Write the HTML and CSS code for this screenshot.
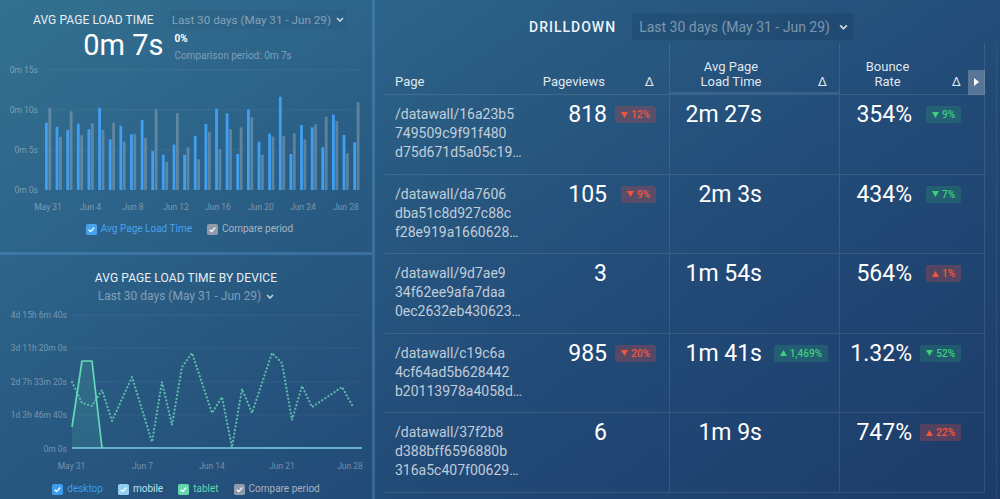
FILE: index.html
```html
<!DOCTYPE html>
<html>
<head>
<meta charset="utf-8">
<link rel="stylesheet" href="styles.css">
</head>
<body>
<div class="app">
  <div class="left">
    <section class="widget w-load">
      <div class="w-head">
        <span class="w-title">AVG PAGE LOAD TIME</span>
        <span class="date-pill">Last 30 days (May 31 - Jun 29)<svg class="chev" viewBox="0 0 8 5"><path d="M1 1l3 3 3-3"/></svg></span>
      </div>
      <div class="kpi">
        <span class="kpi-value">0m 7s</span>
        <div class="kpi-meta">
          <span class="kpi-pct">0%</span>
          <span class="kpi-cmp">Comparison period: 0m 7s</span>
        </div>
      </div>
      <svg class="chart" width="372" height="155" viewBox="0 60 372 155">
        <g class="grid">
          <line x1="43" y1="70" x2="362" y2="70"/>
          <line x1="43" y1="110" x2="362" y2="110"/>
          <line x1="43" y1="150" x2="362" y2="150"/>
        </g>
        <g class="axis" text-anchor="end">
          <text x="38" y="73">0m 15s</text>
          <text x="38" y="113">0m 10s</text>
          <text x="38" y="153">0m 5s</text>
          <text x="38" y="193">0m 0s</text>
        </g>
        <g class="bars-cmp">
          <rect x="48.4" y="107.7" width="2.8" height="82.3"/>
          <rect x="59.0" y="137" width="2.8" height="53"/>
          <rect x="69.7" y="111.3" width="2.8" height="78.7"/>
          <rect x="80.3" y="135.3" width="2.8" height="54.7"/>
          <rect x="90.9" y="123.3" width="2.8" height="66.7"/>
          <rect x="101.6" y="130" width="2.8" height="60"/>
          <rect x="112.2" y="122.7" width="2.8" height="67.3"/>
          <rect x="122.8" y="141.7" width="2.8" height="48.3"/>
          <rect x="133.4" y="134" width="2.8" height="56"/>
          <rect x="144.1" y="138" width="2.8" height="52"/>
          <rect x="154.7" y="109.3" width="2.8" height="80.7"/>
          <rect x="165.3" y="161.7" width="2.8" height="28.3"/>
          <rect x="176.0" y="113.3" width="2.8" height="76.7"/>
          <rect x="186.6" y="147.3" width="2.8" height="42.7"/>
          <rect x="197.2" y="159.3" width="2.8" height="30.7"/>
          <rect x="207.9" y="131.7" width="2.8" height="58.3"/>
          <rect x="218.5" y="149.3" width="2.8" height="40.7"/>
          <rect x="229.1" y="129.3" width="2.8" height="60.7"/>
          <rect x="239.7" y="127.3" width="2.8" height="62.7"/>
          <rect x="250.4" y="117.3" width="2.8" height="72.7"/>
          <rect x="261.0" y="154.7" width="2.8" height="35.3"/>
          <rect x="271.6" y="136.7" width="2.8" height="53.3"/>
          <rect x="282.3" y="136" width="2.8" height="54"/>
          <rect x="292.9" y="133.3" width="2.8" height="56.7"/>
          <rect x="303.5" y="139.3" width="2.8" height="50.7"/>
          <rect x="314.2" y="124.3" width="2.8" height="65.7"/>
          <rect x="324.8" y="116.7" width="2.8" height="73.3"/>
          <rect x="335.4" y="121" width="2.8" height="69"/>
          <rect x="346.0" y="153.3" width="2.8" height="36.7"/>
          <rect x="356.7" y="102.3" width="2.8" height="87.7"/>
        </g>
        <g class="bars-main">
          <rect x="45.0" y="122.7" width="2.8" height="67.3"/>
          <rect x="55.6" y="126.7" width="2.8" height="63.3"/>
          <rect x="66.3" y="130" width="2.8" height="60"/>
          <rect x="76.9" y="123.7" width="2.8" height="66.3"/>
          <rect x="87.5" y="129.3" width="2.8" height="60.7"/>
          <rect x="98.2" y="107.7" width="2.8" height="82.3"/>
          <rect x="108.8" y="139.3" width="2.8" height="50.7"/>
          <rect x="119.4" y="125.7" width="2.8" height="64.3"/>
          <rect x="130.0" y="134.3" width="2.8" height="55.7"/>
          <rect x="140.7" y="120" width="2.8" height="70"/>
          <rect x="151.3" y="151" width="2.8" height="39"/>
          <rect x="161.9" y="154.7" width="2.8" height="35.3"/>
          <rect x="172.6" y="144.7" width="2.8" height="45.3"/>
          <rect x="183.2" y="154.7" width="2.8" height="35.3"/>
          <rect x="193.8" y="136" width="2.8" height="54"/>
          <rect x="204.5" y="124" width="2.8" height="66"/>
          <rect x="215.1" y="108.7" width="2.8" height="81.3"/>
          <rect x="225.7" y="113.3" width="2.8" height="76.7"/>
          <rect x="236.3" y="154" width="2.8" height="36"/>
          <rect x="247.0" y="109.3" width="2.8" height="80.7"/>
          <rect x="257.6" y="141.7" width="2.8" height="48.3"/>
          <rect x="268.2" y="133.7" width="2.8" height="56.3"/>
          <rect x="278.9" y="96.7" width="2.8" height="93.3"/>
          <rect x="289.5" y="154" width="2.8" height="36"/>
          <rect x="300.1" y="125" width="2.8" height="65"/>
          <rect x="310.8" y="127.3" width="2.8" height="62.7"/>
          <rect x="321.4" y="147.3" width="2.8" height="42.7"/>
          <rect x="332.0" y="114.7" width="2.8" height="75.3"/>
          <rect x="342.6" y="135" width="2.8" height="55"/>
          <rect x="353.3" y="142.3" width="2.8" height="47.7"/>
        </g>
        <g class="axis" text-anchor="middle">
          <text x="48" y="210">May 31</text>
          <text x="90.5" y="210">Jun 4</text>
          <text x="133" y="210">Jun 8</text>
          <text x="176" y="210">Jun 12</text>
          <text x="218" y="210">Jun 16</text>
          <text x="261" y="210">Jun 20</text>
          <text x="303" y="210">Jun 24</text>
          <text x="346" y="210">Jun 28</text>
        </g>
      </svg>
      <div class="legend">
        <span class="lg lg-main"><svg class="cb" viewBox="0 0 12 12"><rect width="12" height="12" rx="2"/><path d="M3 6.2l2.1 2.1L9 3.8"/></svg>Avg Page Load Time</span>
        <span class="lg lg-cmp"><svg class="cb" viewBox="0 0 12 12"><rect width="12" height="12" rx="2"/><path d="M3 6.2l2.1 2.1L9 3.8"/></svg>Compare period</span>
      </div>
    </section>

    <section class="widget w-device">
      <div class="w-title center">AVG PAGE LOAD TIME BY DEVICE</div>
      <div class="date-line">Last 30 days (May 31 - Jun 29)<svg class="chev" viewBox="0 0 8 5"><path d="M1 1l3 3 3-3"/></svg></div>
      <svg class="chart" width="372" height="173" viewBox="0 304 372 173">
        <g class="grid">
          <line x1="72" y1="315" x2="362" y2="315"/>
          <line x1="72" y1="348" x2="362" y2="348"/>
          <line x1="72" y1="382" x2="362" y2="382"/>
          <line x1="72" y1="415" x2="362" y2="415"/>
        </g>
        <g class="axis" text-anchor="end">
          <text x="67" y="318">4d 15h 6m 40s</text>
          <text x="67" y="351">3d 11h 20m 0s</text>
          <text x="67" y="385">2d 7h 33m 20s</text>
          <text x="67" y="418">1d 3h 46m 40s</text>
          <text x="67" y="452">0m 0s</text>
        </g>
        <polygon class="tab-fill" points="72,448 72,427 82,361 92,361 102,448"/>
        <polyline class="cmp-line" points="72,382 82,403 92,406 102,390 112,421 132,377 152,442 162,382 172,425 182,367 192,353 212,413 222,397 232,447 242,389 252,413 272,353 282,363 292,420 302,386 312,407 342,387 352,405"/>
        <line class="mob-line" x1="72" y1="448" x2="362" y2="448"/>
        <polyline class="tab-line" points="72,427 82,361 92,361 102,448"/>
        <g class="axis" text-anchor="middle">
          <text x="71.5" y="469">May 31</text>
          <text x="142.5" y="469">Jun 7</text>
          <text x="212" y="469">Jun 14</text>
          <text x="282" y="469">Jun 21</text>
          <text x="350" y="469">Jun 28</text>
        </g>
      </svg>
      <div class="legend">
        <span class="lg lg-desk"><svg class="cb" viewBox="0 0 12 12"><rect width="12" height="12" rx="2"/><path d="M3 6.2l2.1 2.1L9 3.8"/></svg>desktop</span>
        <span class="lg lg-mob"><svg class="cb" viewBox="0 0 12 12"><rect width="12" height="12" rx="2"/><path d="M3 6.2l2.1 2.1L9 3.8"/></svg>mobile</span>
        <span class="lg lg-tab"><svg class="cb" viewBox="0 0 12 12"><rect width="12" height="12" rx="2"/><path d="M3 6.2l2.1 2.1L9 3.8"/></svg>tablet</span>
        <span class="lg lg-cmp"><svg class="cb" viewBox="0 0 12 12"><rect width="12" height="12" rx="2"/><path d="M3 6.2l2.1 2.1L9 3.8"/></svg>Compare period</span>
      </div>
    </section>
  </div>

  <div class="right">
    <div class="r-head">
      <h2 class="r-title">DRILLDOWN</h2>
      <span class="r-date">Last 30 days (May 31 - Jun 29)<svg class="chev big" viewBox="0 0 8 5"><path d="M1 1l3 3 3-3"/></svg></span>
    </div>
    <div class="table-area">
      <div class="dtable">
        <div class="trow thead">
          <div class="th th-page"><span>Page</span></div>
          <div class="th th-pv"><span>Pageviews</span></div>
          <div class="th th-dpv"><span>Δ</span></div>
          <div class="th th-avg sorted"><span>Avg Page<br>Load Time</span></div>
          <div class="th th-davg sorted"><span>Δ</span></div>
          <div class="th th-br"><span>Bounce<br>Rate</span></div>
          <div class="th th-dbr"><span>Δ</span></div>
        </div>

        <div class="trow">
          <div class="td-page"><span>/datawall/16a23b5</span><span>749509c9f91f480</span><span>d75d671d5a05c19…</span></div>
          <div class="td-val pv">818</div>
          <div class="td-delta dpv"><span class="badge bad"><svg class="tri" viewBox="0 0 8 7"><path d="M0 0h8L4 7z"/></svg>12%</span></div>
          <div class="td-val avg">2m 27s</div>
          <div class="td-delta davg"></div>
          <div class="td-val br">354%</div>
          <div class="td-delta dbr"><span class="badge good"><svg class="tri" viewBox="0 0 8 7"><path d="M0 0h8L4 7z"/></svg>9%</span></div>
        </div>

        <div class="trow">
          <div class="td-page"><span>/datawall/da7606</span><span>dba51c8d927c88c</span><span>f28e919a1660628…</span></div>
          <div class="td-val pv">105</div>
          <div class="td-delta dpv"><span class="badge bad"><svg class="tri" viewBox="0 0 8 7"><path d="M0 0h8L4 7z"/></svg>9%</span></div>
          <div class="td-val avg">2m 3s</div>
          <div class="td-delta davg"></div>
          <div class="td-val br">434%</div>
          <div class="td-delta dbr"><span class="badge good"><svg class="tri" viewBox="0 0 8 7"><path d="M0 0h8L4 7z"/></svg>7%</span></div>
        </div>

        <div class="trow">
          <div class="td-page"><span>/datawall/9d7ae9</span><span>34f62ee9afa7daa</span><span>0ec2632eb430623…</span></div>
          <div class="td-val pv">3</div>
          <div class="td-delta dpv"></div>
          <div class="td-val avg">1m 54s</div>
          <div class="td-delta davg"></div>
          <div class="td-val br">564%</div>
          <div class="td-delta dbr"><span class="badge bad"><svg class="tri" viewBox="0 0 8 7"><path d="M4 0l4 7H0z"/></svg>1%</span></div>
        </div>

        <div class="trow">
          <div class="td-page"><span>/datawall/c19c6a</span><span>4cf64ad5b628442</span><span>b20113978a4058d…</span></div>
          <div class="td-val pv">985</div>
          <div class="td-delta dpv"><span class="badge bad"><svg class="tri" viewBox="0 0 8 7"><path d="M0 0h8L4 7z"/></svg>20%</span></div>
          <div class="td-val avg">1m 41s</div>
          <div class="td-delta davg"><span class="badge good"><svg class="tri" viewBox="0 0 8 7"><path d="M4 0l4 7H0z"/></svg>1,469%</span></div>
          <div class="td-val br">1.32%</div>
          <div class="td-delta dbr"><span class="badge good"><svg class="tri" viewBox="0 0 8 7"><path d="M0 0h8L4 7z"/></svg>52%</span></div>
        </div>

        <div class="trow">
          <div class="td-page"><span>/datawall/37f2b8</span><span>d388bff6596880b</span><span>316a5c407f00629…</span></div>
          <div class="td-val pv">6</div>
          <div class="td-delta dpv"></div>
          <div class="td-val avg">1m 9s</div>
          <div class="td-delta davg"></div>
          <div class="td-val br">747%</div>
          <div class="td-delta dbr"><span class="badge bad"><svg class="tri" viewBox="0 0 8 7"><path d="M4 0l4 7H0z"/></svg>22%</span></div>
        </div>

        <button class="scroll-btn" aria-label="Scroll right"></button>
      </div>
    </div>
  </div>
</div>
</body>
</html>
```

FILE: styles.css
```css
* { box-sizing: border-box; }

html, body {
  margin: 0;
  padding: 0;
}

body {
  width: 1000px;
  height: 499px;
  overflow: hidden;
  font-family: Roboto, "Liberation Sans", Arial, sans-serif;
  color: #fff;
  background: linear-gradient(145deg, #33718f 0%, #2d648a 22%, #27577f 42%, #234c79 60%, #1c3b68 100%);
}

.app {
  display: flex;
  height: 499px;
}

/* ---------- left column ---------- */
.left {
  width: 375px;
  flex: none;
  display: flex;
  flex-direction: column;
  border-right: 3px solid rgba(95, 165, 220, 0.32);
}

.widget {
  display: flex;
  flex-direction: column;
  align-items: center;
}

.w-load {
  height: 255px;
  flex: none;
  padding-top: 9px;
  border-bottom: 3px solid rgba(95, 165, 220, 0.32);
}

.w-device {
  flex: 1;
  padding-top: 14px;
}

.w-head {
  height: 21px;
  padding-left: 7px;
  display: flex;
  align-items: center;
  justify-content: center;
  gap: 15px;
}

.w-title {
  font-size: 12px;
  line-height: 18px;
  color: #e7eff5;
  letter-spacing: 0.1px;
}

.date-pill {
  display: inline-flex;
  align-items: center;
  height: 19px;
  padding: 0 2px 0 3px;
  font-size: 11.7px;
  color: rgba(255, 255, 255, 0.42);
  background: rgba(20, 45, 80, 0.08);
  border-radius: 2px;
}

.date-line {
  margin-top: 1px;
  display: flex;
  align-items: center;
  height: 16px;
  font-size: 12px;
  color: rgba(255, 255, 255, 0.42);
}

.chev {
  width: 8px;
  height: 5px;
  margin-left: 5px;
  fill: none;
  stroke: rgba(255, 255, 255, 0.75);
  stroke-width: 1.6;
}

.chev.big {
  width: 9px;
  height: 6px;
  margin-left: 9px;
}

.kpi {
  height: 30px;
  padding-left: 3px;
  display: flex;
  align-items: flex-start;
  justify-content: center;
  gap: 11px;
}

.kpi-value {
  font-size: 29px;
  line-height: 30px;
  color: #fff;
}

.kpi-meta {
  display: flex;
  flex-direction: column;
  padding-top: 3px;
  gap: 5px;
}

.kpi-pct {
  font-size: 10px;
  line-height: 12px;
  font-weight: 700;
}

.kpi-cmp {
  font-size: 10px;
  line-height: 12px;
  color: rgba(255, 255, 255, 0.38);
}

.chart {
  display: block;
  flex: none;
}

.grid line {
  stroke: rgba(255, 255, 255, 0.06);
  stroke-width: 1;
}

.axis text {
  font-family: Roboto, "Liberation Sans", Arial, sans-serif;
  font-size: 8.5px;
  fill: rgba(255, 255, 255, 0.36);
}

.bars-main rect { fill: #3f9ff0; }
.bars-cmp rect { fill: rgba(165, 180, 196, 0.42); }

.tab-fill { fill: rgba(100, 220, 185, 0.13); }

.cmp-line {
  fill: none;
  stroke: rgba(102, 205, 178, 0.85);
  stroke-width: 2.2;
  stroke-dasharray: 0.1 3.6;
  stroke-linecap: round;
  stroke-linejoin: round;
}

.mob-line {
  stroke: #78d2e6;
  stroke-width: 1.6;
}

.tab-line {
  fill: none;
  stroke: #63dab7;
  stroke-width: 1.7;
  stroke-linejoin: round;
}

.legend {
  margin-top: 6px;
  height: 16px;
  display: flex;
  align-items: center;
  justify-content: center;
  gap: 15px;
}

.w-load .legend { padding-left: 7px; }
.w-device .legend { margin-top: 4px; }

.lg {
  display: inline-flex;
  align-items: center;
  gap: 4px;
  font-size: 10px;
  line-height: 12px;
}

.cb {
  width: 11px;
  height: 11px;
}

.cb path {
  fill: none;
  stroke: rgba(255, 255, 255, 0.95);
  stroke-width: 1.5;
}

.lg-main { color: #47a2f0; }
.lg-main .cb rect { fill: #47a2f0; }
.lg-cmp { color: #a8b3bf; }
.lg-cmp .cb rect { fill: #8f9bab; }
.lg-desk { color: #3e9cec; }
.lg-desk .cb rect { fill: #3e9cec; }
.lg-mob { color: #b9e1f4; }
.lg-mob .cb rect { fill: #8fd0f1; }
.lg-tab { color: #62d6ae; }
.lg-tab .cb rect { fill: #62d6ae; }

/* ---------- right panel ---------- */
.right {
  flex: 1;
  display: flex;
  flex-direction: column;
}

.r-head {
  height: 43px;
  padding: 13px 0 3px 8px;
  display: flex;
  align-items: center;
  justify-content: center;
  gap: 16px;
}

.r-title {
  margin: 0;
  font-size: 14px;
  font-weight: 500;
  letter-spacing: 1px;
  color: #eef3f7;
}

.r-date {
  display: inline-flex;
  align-items: center;
  height: 27px;
  padding: 0 6px 0 7px;
  font-size: 14px;
  color: rgba(255, 255, 255, 0.42);
  background: rgba(15, 35, 70, 0.16);
  border-radius: 2px;
}

.table-area {
  flex: 1;
  width: 622px;
  padding-left: 10px;
  border-right: 1px solid rgba(255, 255, 255, 0.06);
}

.dtable {
  position: relative;
  width: 600px;
}

.trow {
  display: grid;
  grid-template-columns: 145px 85px 55px 100px 70px 95px 50px;
  height: 79.5px;
  border-bottom: 1px solid rgba(255, 255, 255, 0.1);
}

.trow > :nth-child(3),
.trow > :nth-child(5),
.trow > :nth-child(7) {
  border-right: 1px solid rgba(255, 255, 255, 0.1);
}

.thead {
  height: 52px;
}

.th {
  display: flex;
  flex-direction: column;
  justify-content: flex-end;
  padding-bottom: 5px;
  font-size: 13px;
  line-height: 15px;
  color: rgba(255, 255, 255, 0.88);
}

.th-page { padding-left: 10px; }
.th-pv { text-align: right; padding-right: 10px; }
.th-dpv { text-align: right; padding-right: 15px; }
.th-avg { text-align: center; padding-left: 22px; }
.th-davg { text-align: right; padding-right: 12px; }
.th-br { text-align: center; }
.th-dbr { text-align: right; padding-right: 23px; }

.th.sorted {
  box-shadow: inset 0 -2px 0 rgba(255, 255, 255, 0.1);
}

.td-page {
  display: flex;
  flex-direction: column;
  padding: 10px 0 0 10px;
  font-size: 14px;
  line-height: 19px;
  color: rgba(255, 255, 255, 0.72);
  white-space: nowrap;
}

.td-val {
  display: flex;
  justify-content: flex-end;
  align-items: flex-start;
  padding-top: 7px;
  font-size: 23px;
  line-height: 26px;
  color: #fff;
  white-space: nowrap;
}

.td-val.pv { padding-right: 8px; }
.td-val.avg { padding-right: 8px; }
.td-val.br { padding-right: 23px; }

.td-delta {
  display: flex;
  justify-content: flex-end;
  align-items: flex-start;
  padding-top: 11px;
}

.td-delta.dpv { padding-right: 13px; }
.td-delta.davg { padding-right: 11px; }
.td-delta.dbr { padding-right: 23px; }

.badge {
  display: inline-flex;
  align-items: center;
  gap: 3px;
  height: 17px;
  padding: 0 6px 0 6px;
  border-radius: 2px;
  font-size: 10px;
  font-weight: 500;
  white-space: nowrap;
}

.badge .tri {
  width: 7px;
  height: 6px;
  fill: currentColor;
}

.badge.bad {
  color: #f2573d;
  background: rgba(222, 72, 62, 0.28);
}

.badge.good {
  color: #3fcf7b;
  background: rgba(45, 190, 115, 0.2);
}

.scroll-btn {
  position: absolute;
  left: 583px;
  top: 27px;
  width: 17px;
  height: 25px;
  padding: 0;
  border: 0;
  background: rgba(255, 255, 255, 0.24);
  cursor: pointer;
}

.scroll-btn::after {
  content: "";
  position: absolute;
  left: 6px;
  top: 8px;
  border-left: 5px solid #fff;
  border-top: 4.5px solid transparent;
  border-bottom: 4.5px solid transparent;
}
```
